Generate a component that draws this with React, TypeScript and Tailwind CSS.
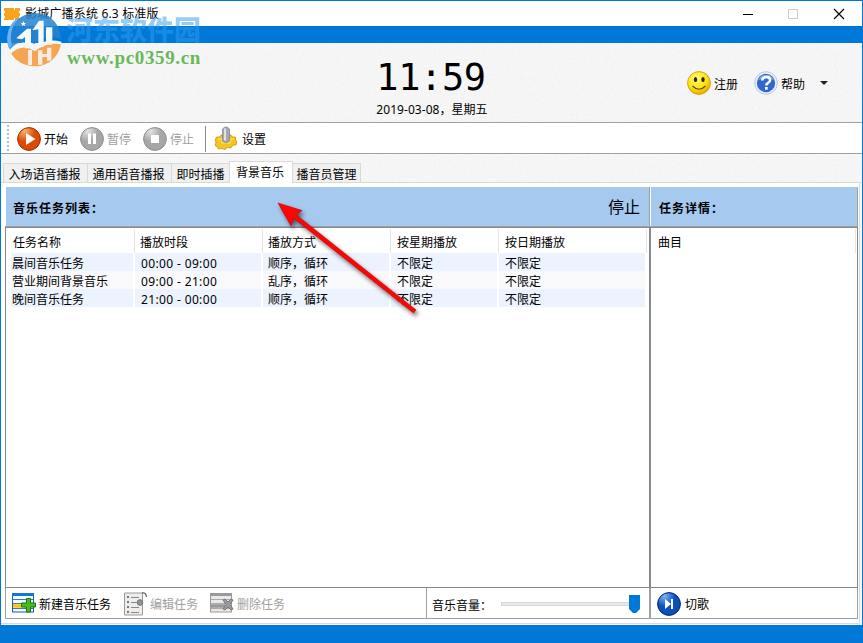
import type { ReactNode } from "react";

const columns = ["任务名称", "播放时段", "播放方式", "按星期播放", "按日期播放"];
const tasks = [
  ["晨间音乐任务", "00:00 - 09:00", "顺序，循环", "不限定", "不限定"],
  ["营业期间背景音乐", "09:00 - 21:00", "乱序，循环", "不限定", "不限定"],
  ["晚间音乐任务", "21:00 - 00:00", "顺序，循环", "不限定", "不限定"],
];
const gridCols = "grid grid-cols-[129px_128px_128px_108px_148px]";

function Grain() {
  return (
    <svg className="pointer-events-none absolute inset-0 h-full w-full opacity-[0.09]">
      <filter id="grain">
        <feTurbulence type="fractalNoise" baseFrequency="0.45" numOctaves="2" />
        <feColorMatrix type="saturate" values="0" />
      </filter>
      <rect width="100%" height="100%" filter="url(#grain)" />
    </svg>
  );
}

function RoundIcon({ kind }: { kind: "play" | "pause" | "stop" | "next" }) {
  const colors = {
    play: ["#f9b46c", "#dd4a05", "#9c2a00"],
    pause: ["#e4e4e4", "#a6a6a6", "#8c8c8c"],
    stop: ["#e4e4e4", "#a6a6a6", "#8c8c8c"],
    next: ["#7db4f4", "#0a50bd", "#001f78"],
  }[kind];
  return (
    <svg width="24" height="24" viewBox="0 0 24 24" className="shrink-0">
      <defs>
        <radialGradient id={"ball-" + kind} cx="0.3" cy="0.15" r="0.85">
          <stop offset="0" stopColor={colors[0]} />
          <stop offset="0.55" stopColor={colors[1]} />
          <stop offset="1" stopColor={colors[1]} />
        </radialGradient>
      </defs>
      <circle cx="12" cy="12" r="11.4" fill={"url(#ball-" + kind + ")"} stroke={colors[2]} />
      {kind === "play" && <path d="M9 6v12l9.500-6z" fill="#fff" />}
      {kind === "pause" && <path d="M8 6.500h3v10.500H8zM13 6.500h3v10.500h-3z" fill="#fff" />}
      {kind === "stop" && <path d="M8 8h8v8H8z" fill="#fff" />}
      {kind === "next" && <path d="M8 7l6 5-6 5zM14 7h2v10h-2z" fill="#fff" />}
    </svg>
  );
}

function Smiley() {
  return (
    <svg width="24" height="24" viewBox="0 0 24 24">
      <defs>
        <radialGradient id="smile" cx="0.4" cy="0.3" r="0.7">
          <stop offset="0" stopColor="#fff980" />
          <stop offset="0.6" stopColor="#ffe51a" />
          <stop offset="1" stopColor="#e8ab00" />
        </radialGradient>
      </defs>
      <circle cx="12" cy="12" r="11.4" fill="url(#smile)" stroke="#d9a400" />
      <ellipse cx="8.5" cy="8.5" rx="1.7" ry="2.5" fill="#33240a" />
      <ellipse cx="16" cy="8.5" rx="1.7" ry="2.5" fill="#33240a" />
      <path d="M5.5 15q6.5 6.500 13 0" fill="none" stroke="#65460a" strokeWidth="1.1" />
    </svg>
  );
}

function HelpIcon() {
  return (
    <svg width="24" height="24" viewBox="0 0 24 24">
      <circle cx="12" cy="12" r="11.3" fill="#edf2fb" stroke="#b7c6e4" />
      <circle cx="12" cy="12" r="9.2" fill="#3168cf" />
      <path d="M4 9a8.7 8.7 0 0 1 16 0q-7-3-16 0" fill="#74a4ed" />
      <path d="M8.3 9.5q.2-3.6 4-3.6 3.8 0 3.8 3.1 0 1.7-2 2.9-1.8 1-1.8 2.5" fill="none" stroke="#fff" strokeWidth="2.5" />
      <rect x="11" y="16" width="2.7" height="2.7" fill="#fff" />
    </svg>
  );
}

function GearIcon() {
  return (
    <svg width="24" height="25" viewBox="0 0 24 25">
      <path d="M2.500 11h3.500l1-2h10l1 2h3.500v3.500l1.500 1-1 3.500h-3l-2 3-3.500-.5-2.500 2-3-1-3.500.5-1.500-2.500-2-1 1-3-1-2z" fill="#f2c521" stroke="#c7930d" strokeWidth=".8" />
      <path d="M4 13h4v4h8v-4h4" fill="none" stroke="#fbe474" strokeWidth="1.2" />
      <path d="M8.500 3q3.500-4 7 0v12q-3.500 3-7 0z" fill="#a6a8b4" stroke="#83858f" strokeWidth=".8" />
      <path d="M11 2.5v12" stroke="#e0e1ea" strokeWidth="2" />
    </svg>
  );
}

function ListIcon({ mode }: { mode: "add" | "delete" }) {
  const add = mode === "add";
  return (
    <svg width="25" height="21" viewBox="0 0 25 21" className="shrink-0">
      <rect x=".5" y="1" width="21" height="18" fill={add ? "#f7fbff" : "#e9e9e9"} stroke={add ? "#1d5cb4" : "#999"} />
      <path d="M0 1.5h22" stroke={add ? "#1376d9" : "#999"} strokeWidth="3" />
      <path d="M1 6.5h20M1 10.5h20M1 15.5h20" stroke={add ? "#3379c9" : "#aaa"} />
      <path d="M1 13h14" stroke={add ? "#ffc500" : "#999"} strokeWidth="3.5" />
      {add ? (
        <path d="M14.5 5.5h4v4.5h5v4h-5v5h-4v-5h-5v-4h5z" fill="#48bd23" stroke="#16760e" />
      ) : (
        <path d="M13 7l2-1 3 3 3-3 2 1-3 4.500 3 4.500-2 1-3-3-3 3-2-1 3-4.500z" fill="#9b9b9b" stroke="#777" />
      )}
    </svg>
  );
}

function EditIcon() {
  return (
    <svg width="24" height="24" viewBox="0 0 24 24" className="shrink-0">
      <path d="M.5 1h18v22H.5z" fill="#ececec" stroke="#999" />
      <path d="M3 4h2v2H3zM3 9h2v2H3zM3 14h2v2H3zM3 19h2v2H3z" fill="#777" />
      <path d="M7 5.5h8M7 10.5h6M7 15.5h8M7 20.5h8" stroke="#888" />
      <circle cx="16" cy="10.5" r="2.8" fill="#929292" stroke="#757575" />
      <path d="M18 1q4-1 4.5 4" fill="none" stroke="#666" strokeWidth="1.3" />
    </svg>
  );
}

function Tool({ icon, children, disabled, gap = "gap-[4px]" }: { icon: ReactNode; children: ReactNode; disabled?: boolean; gap?: string }) {
  return (
    <div className={`flex h-6 items-center whitespace-nowrap ${gap} ${disabled ? "text-[#a0a0a0]" : "text-black"}`}>
      {icon}
      <span className="pt-[3px]">{children}</span>
    </div>
  );
}

function Watermark() {
  return (
    <div className="pointer-events-none absolute left-[1px] top-[1px] h-[72px] w-[200px]">
      <svg width="80" height="72" viewBox="0 0 240 216" className="absolute left-0 top-0">
        <path d="M24 144C5 91 39 36 98 33c44-2 79 34 79 78-32-10-59-2-80 15-26-13-57-7-73 18z" fill="#2583cf" opacity=".86" />
        <path d="M26 151c22-25 50-29 74-12 25-19 50-25 77-17-5 42-37 70-77 71-35 0-63-17-74-42z" fill="#f59b40" opacity=".9" />
        <path d="M20 138C8 101 20 62 54 43 29 67 22 101 30 131z" fill="#66b3ef" />
        <path d="M43 109L75 80h12v59H69v-34l-9 7zM91 85l20-29h14v79h-16V82zM132 76h19v52h-19z" fill="#fff" opacity=".95" />
        <path d="M24 145c23-30 52-29 75-12 24-17 50-21 79-14v8c-30-5-56 2-79 21-25-17-48-15-73 7z" fill="#f2f6fa" />
        <path d="M78 144h12v45H78zM108 145h13v43h-13zM135 137h13v39h-13zM112 156h32v9h-32z" fill="#f9ede3" />
        <path d="M64 57l2.500 6h6l-5 4 2 6-5.500-4-5 4 2-6-5-4h6z" fill="#fff" />
      </svg>
      <div className="absolute left-[64px] top-[12px] whitespace-nowrap font-['Noto_Sans_CJK_SC',sans-serif] text-[27px] font-black leading-[30px] text-[#2f9cf0] opacity-50">河东软件园</div>
      <div className="absolute left-[65px] top-[46px] whitespace-nowrap font-['Liberation_Serif',serif] text-[19px] font-bold leading-[20px] tracking-[0.65px] text-[#68b957]">www.pc0359.cn</div>
    </div>
  );
}

export default function App() {
  return (
    <div className="relative flex h-[643px] w-[863px] flex-col overflow-hidden border border-[#0078d7] bg-[#f8f8f8] font-['Noto_Sans','Noto_Sans_CJK_SC',sans-serif] text-[12px] leading-[18px] text-black">
      <div className="flex h-[25px] shrink-0 items-center bg-white pl-[3px]">
        <svg width="16" height="12" viewBox="0 0 16 12">
          <path d="M0 0h10v2h1V0h5v3h-1v2h1v3h-1v2h1v2h-5v-2h-1v2H0v-2h1V8H0V5h1V3H0z" fill="#f9a51b" />
        </svg>
        <span className="ml-[5px] flex-1 text-[12px] tracking-[0.18px]">影城广播系统 6.3 标准版</span>
        <svg width="125" height="24" viewBox="0 0 125 24" fill="none">
          <path d="M6 12.5h10" stroke="#000" />
          <path d="M51.5 7.5h9v9h-9z" stroke="#ccc" />
          <path d="M97 7l10 10m0-10L97 17" stroke="#000" strokeWidth="1.2" />
        </svg>
      </div>
      <div className="h-[17px] shrink-0 bg-[#0078d7]" />

      <header className="relative h-[79px] shrink-0">
        <Grain />
        <div className="relative flex h-full">
          <div className="ml-[309px] flex w-[242px] shrink-0 flex-col items-center">
            <div className="mt-[14px] h-[42px] font-['DejaVu_Sans_Mono',monospace] text-[37px] leading-[42px] tracking-[-0.4px]">11:59</div>
            <div className="mt-[2px] whitespace-nowrap pl-[2px] text-[12px] tracking-[0.05px]">2019-03-08，星期五</div>
          </div>
          <div className="ml-[135px] mt-[28px] flex h-6 items-center">
            <Smiley />
            <span className="ml-[3px] w-[40px] pt-[3px]">注册</span>
            <HelpIcon />
            <span className="ml-[3px] w-[39px] pt-[3px]">帮助</span>
            <svg width="8" height="5" viewBox="0 0 8 5"><path d="M0 0h8L4 4z" fill="#222" /></svg>
          </div>
        </div>
      </header>

      <div className="flex h-[32px] shrink-0 items-center border-y border-[#a0a0a0] bg-white pl-[6px] pt-px">
        <div className="mr-[8px] h-[28px] w-[2px] bg-[repeating-linear-gradient(to_bottom,#bbb_0px,#bbb_2px,transparent_2px,transparent_4px)]" />
        <div className="w-[63px]"><Tool gap="gap-[3px]" icon={<RoundIcon kind="play" />}>开始</Tool></div>
        <div className="w-[63px]"><Tool disabled gap="gap-[3px]" icon={<RoundIcon kind="pause" />}>暂停</Tool></div>
        <div className="w-[62px]"><Tool disabled gap="gap-[3px]" icon={<RoundIcon kind="stop" />}>停止</Tool></div>
        <div className="mr-[8px] h-[26px] w-px bg-[#888]" />
        <Tool icon={<GearIcon />}>设置</Tool>
      </div>

      <div className="relative h-[29px] shrink-0 border-b border-[#d9d9d9]">
        <Grain />
        <nav className="relative -mb-px flex h-[29px] items-end pl-[2px]">
          <span className="flex h-[20px] w-[84px] items-center justify-center border border-r-0 border-[#d9d9d9] bg-[#f0f0f0] pr-[2px] pt-[3px]">入场语音播报</span>
          <span className="flex h-[20px] w-[84px] items-center justify-center border border-r-0 border-[#d9d9d9] bg-[#f0f0f0] pr-[2px] pt-[3px]">通用语音播报</span>
          <span className="flex h-[20px] w-[58px] items-center justify-center border border-r-0 border-[#d9d9d9] bg-[#f0f0f0] pt-[3px]">即时插播</span>
          <span className="flex h-[22px] w-[64px] items-center justify-center border border-b-0 border-[#d9d9d9] bg-white pr-[2px]">背景音乐</span>
          <span className="flex h-[20px] w-[68px] items-center justify-center border border-l-0 border-[#d9d9d9] bg-[#f0f0f0] pt-[3px]">播音员管理</span>
        </nav>
      </div>

      <main className="mr-[2px] flex h-[441px] shrink-0 border-b border-r border-[#d9d9d9] bg-white pl-[4px] pt-[4px]">
        <section className="flex w-[645px] shrink-0 flex-col">
          <div className="ml-px flex h-[39px] items-center justify-between border-r border-[#a0a0a0] bg-[#a6c9ef] pl-[7px] pr-[9px]">
            <b className="pt-[5px] tracking-[1px]">音乐任务列表：</b>
            <span className="pt-px text-[16px]">停止</span>
          </div>
          <div className="h-px shrink-0 bg-[#a0a0a0]" />
          <div className="h-[361px] border border-[#828790] bg-white">
            <div className={`${gridCols} h-[25px]`}>
              {columns.map((name, i) => (
                <div key={name} className={`mt-px h-[24px] border-r border-[#e5e5e5] pt-[5px] ${i === 0 ? "pl-[7px]" : i < 3 ? "pl-[5px]" : "pl-[6px]"}`}>{name}</div>
              ))}
            </div>
            {tasks.map((task, row) => (
              <div key={task[0]} className={`${gridCols} h-[18px]`}>
                {task.map((value, i) => (
                  <div key={i} className={`mr-[2px] h-[18px] whitespace-nowrap ${i === 0 ? "ml-[5px] pl-px" : i === 2 ? "pl-[5px]" : "pl-[6px]"} ${i === 1 ? "tracking-[0.36px]" : ""} ${row === 1 ? "bg-[#f9f9fc]" : "bg-[#ecf3fe]"}`}>
                    <span className="block pt-[2px] leading-[18px]">{value}</span>
                  </div>
                ))}
              </div>
            ))}
          </div>
          <div className="flex h-[31px] border border-t-0 border-[#a0a0a0] bg-white">
            <div className="flex w-[421px] items-center border-r border-[#a0a0a0] pl-[6px] pt-px">
              <div className="w-[112px]"><Tool gap="gap-[2px]" icon={<ListIcon mode="add" />}>新建音乐任务</Tool></div>
              <div className="w-[86px]"><Tool disabled gap="gap-[2px]" icon={<EditIcon />}>编辑任务</Tool></div>
              <Tool disabled gap="gap-[2px]" icon={<ListIcon mode="delete" />}>删除任务</Tool>
            </div>
            <div className="flex flex-1 items-center pl-[5px] pt-[2px]">
              <span className="w-[69px] pt-[3px]">音乐音量：</span>
              <div className="flex items-center">
                <div className="h-[4px] w-[128px] border border-r-0 border-[#d6d6d6] bg-[#e7eaea]" />
                <svg width="11" height="18" viewBox="0 0 11 18"><path d="M0 0h11v14l-4 4H4l-4-4z" fill="#0078d7" /></svg>
              </div>
            </div>
          </div>
        </section>
        <section className="flex w-[208px] shrink-0 flex-col">
          <div className="ml-px flex h-[39px] items-center border-r border-[#a0a0a0] bg-[#a6c9ef] pl-[8px]">
            <b className="pt-[4px] tracking-[1px]">任务详情：</b>
          </div>
          <div className="h-px shrink-0 bg-[#a0a0a0]" />
          <div className="h-[361px] border border-[#828790] bg-white">
            <div className="mt-px h-[24px] w-[205px] border-r border-[#e5e5e5] pl-[7px] pt-[5px]">曲目</div>
          </div>
          <div className="flex h-[31px] items-center border border-t-0 border-[#a0a0a0] pl-[6px] pt-px">
            <Tool icon={<RoundIcon kind="next" />}>切歌</Tool>
          </div>
        </section>
      </main>
      <div className="h-px shrink-0" />
      <footer className="h-[18px] shrink-0 bg-[#0078d7]" />

      <Watermark />
      <svg width="150" height="125" viewBox="0 0 150 125" className="pointer-events-none absolute left-[276px] top-[200px] drop-shadow-[2px_3px_2px_rgba(0,0,0,0.55)]">
        <path d="M1 2L25 9.5 19.500 14 139 109 136.500 112 17 17.500 14 25z" fill="#fb0505" stroke="#d30000" strokeWidth=".6" />
      </svg>
    </div>
  );
}
